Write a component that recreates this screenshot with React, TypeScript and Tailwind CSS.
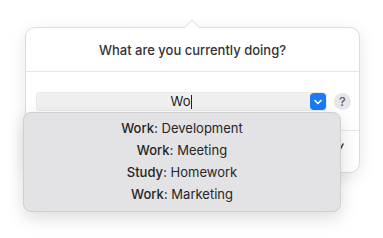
import React from "react";

const items = [
  ["Work", "Development"],
  ["Work", "Meeting"],
  ["Study", "Homework"],
  ["Work", "Marketing"],
];

export default function App() {
  return (
    <div className="relative w-[383px] h-[238px] overflow-hidden bg-white font-['Inter','Noto_Sans',sans-serif] text-[#2b2b2b]">
      <div className="pt-[27px] pl-[25px]">
        <div className="relative w-[335px] h-[146px] rounded-[10px] border border-[#dddddd] bg-white shadow-[0_4px_16px_rgba(0,0,0,0.10)]">
          <svg
            className="absolute -top-[9px] left-[158px]"
            width="16"
            height="10"
            viewBox="0 0 16 10"
          >
            <path d="M0 9.5 L8 1 L16 9.5" fill="white" stroke="#dcdcdc" strokeWidth="1" />
            <rect x="0" y="9.5" width="16" height="1" fill="white" />
          </svg>
          <div className="flex h-[43px] items-center justify-center pt-[2px] text-[13px] font-medium text-[#333]">
            What are you currently doing?
          </div>
          <div className="h-px bg-[#e6e6e6]" />
          <div className="flex items-center gap-[7px] pl-[10px] pt-[20px]">
            <div className="relative flex h-[19px] w-[291px] items-center justify-center rounded-[4px] bg-[#f0f0f0] shadow-[inset_0_0_0_0.5px_rgba(0,0,0,0.06)]">
              <span className="text-[13px] text-[#222]">Wo</span>
              <span className="ml-px h-[14px] w-px bg-[#222]" />
              <div className="absolute right-[1px] top-[1px] flex h-[17px] w-[16px] items-center justify-center rounded-[4px] bg-[#1a7bf5]">
                <svg width="8" height="6" viewBox="0 0 8 6">
                  <path d="M1 1.5 L4 4.5 L7 1.5" fill="none" stroke="white" strokeWidth="1.6" strokeLinecap="round" strokeLinejoin="round" />
                </svg>
              </div>
            </div>
            <div className="flex h-[17px] w-[17px] items-center justify-center rounded-full bg-[#e6e6e6] text-[12px] font-medium text-[#555]">
              ?
            </div>
          </div>
          <div className="mt-[19px] h-px bg-[#e8e8e8]" />
          <div className="flex justify-end pr-[14px] pt-[12px]">
            <svg width="6" height="8" viewBox="0 0 6 8">
              <path d="M1 7 L4 1" stroke="#333" strokeWidth="1.5" strokeLinecap="round" />
            </svg>
          </div>
        </div>
      </div>
      <div className="absolute left-[23px] top-[112px] w-[318px] rounded-[8px] border border-[#cfcfd1] bg-[#e3e2e4] py-[5px] shadow-[0_6px_18px_rgba(0,0,0,0.14)]">
        {items.map(([cat, name]) => (
          <div key={cat + name} className="flex h-[22px] items-center justify-center text-[13px] text-[#262626]">
            <span className="font-medium">{cat}:</span>
            <span>&nbsp;{name}</span>
          </div>
        ))}
      </div>
    </div>
  );
}
